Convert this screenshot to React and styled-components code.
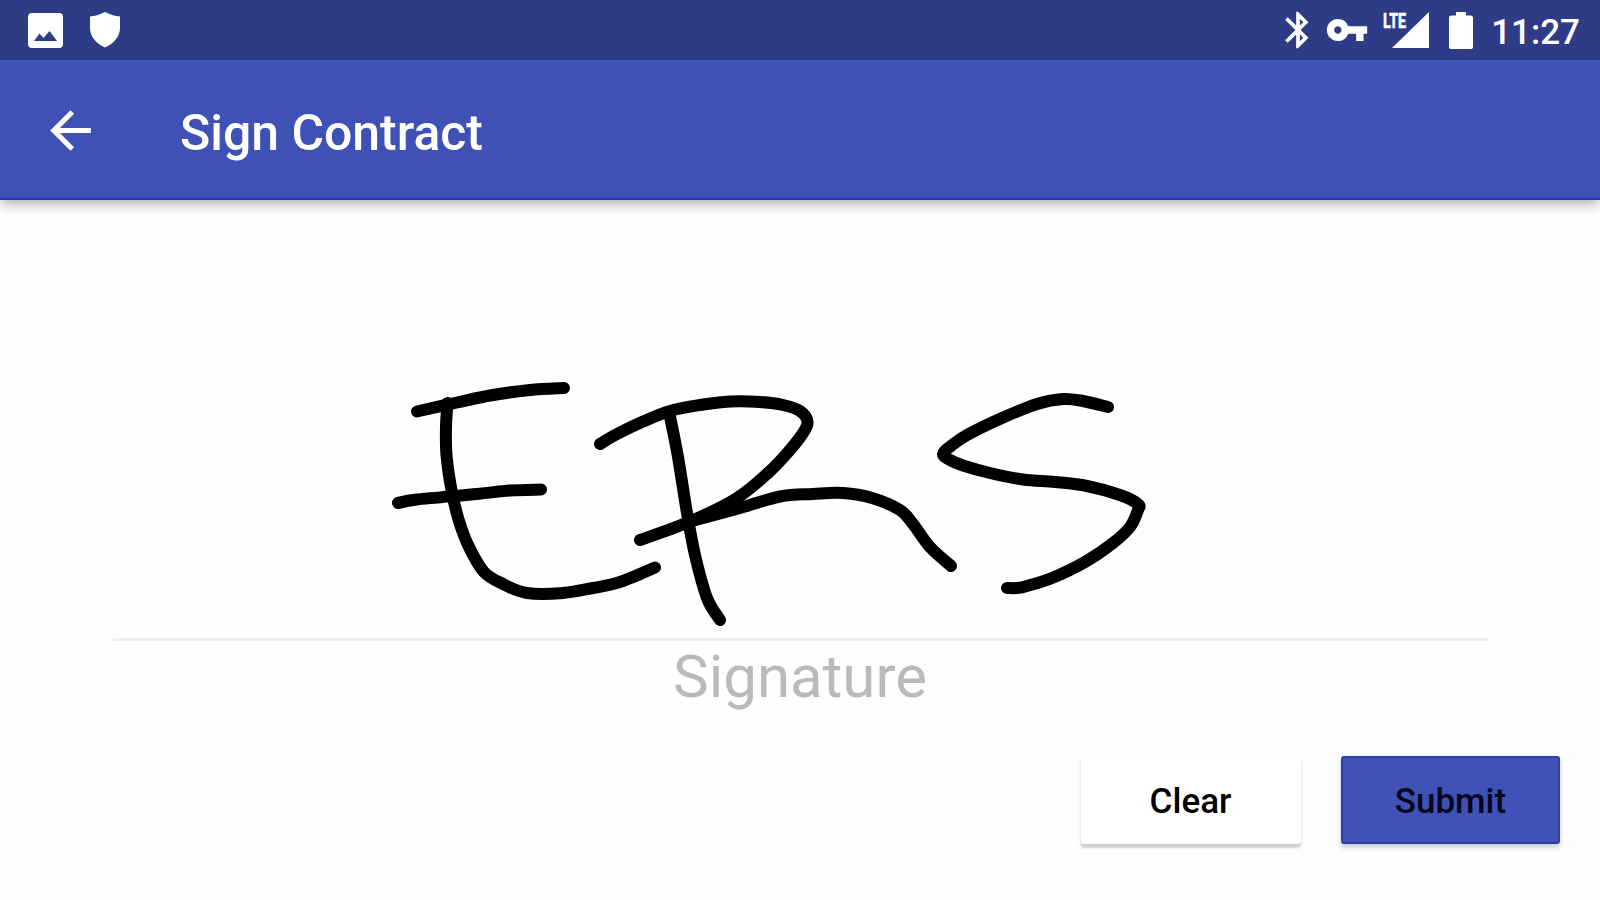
import styled, { createGlobalStyle } from 'styled-components'
import { MdArrowBack, MdBluetooth, MdVpnKey } from 'react-icons/md'

const GlobalStyle = createGlobalStyle`
  * {
    box-sizing: border-box;
  }

  body {
    margin: 0;
    background-color: #fefefe;
    font-family: Roboto, sans-serif;
  }
`

const Screen = styled.div`
  display: flex;
  flex-direction: column;
  width: 1600px;
  height: 900px;
  overflow: hidden;
  background-color: #fefefe;
`

const StatusBar = styled.header`
  display: flex;
  justify-content: space-between;
  align-items: center;
  height: 60px;
  padding: 0 20px 0 28px;
  color: #fff;
  background-color: #2e3c87;
`

const StatusGroup = styled.div`
  display: flex;
  align-items: center;
  gap: ${(props) => props.$gap || 0};
  margin-left: ${(props) => props.$offset || 0};

  svg {
    display: block;
    overflow: visible;
  }
`

const Clock = styled.span`
  margin-left: 18px;
  padding-top: 5px;
  font-size: 35px;
  font-weight: 500;
  line-height: 60px;
`

const AppBar = styled.nav`
  display: flex;
  flex-shrink: 0;
  align-items: center;
  height: 140px;
  padding: 2px 0 0 40px;
  color: #fff;
  background-color: #3f51b5;
  border-bottom: 2px solid #2238ab;
  box-shadow: 0 4px 12px rgba(0, 0, 0, 0.32);
  clip-path: inset(0 0 -24px 0);
`

const BackButton = styled.button`
  display: flex;
  padding: 0;
  border: 0;
  color: inherit;
  background: none;
`

const Title = styled.h1`
  margin: 6px 0 0 79px;
  font-size: 49.9px;
  font-weight: 500;
  line-height: 60px;
`

const SignaturePad = styled.main`
  display: flex;
  flex-direction: column;
  margin: 0 112px 0 113px;
`

const Ink = styled.svg`
  display: block;
  width: 1375px;
  height: 438px;
  fill: none;
  stroke: #000;
  stroke-width: 12px;
  stroke-linecap: round;
  stroke-linejoin: round;
`

const Caption = styled.div`
  padding: 1px 1px 3px 0;
  border-top: 3px solid #eee;
  color: #bababa;
  font-size: 60px;
  line-height: 70px;
  text-align: center;
`

const Actions = styled.footer`
  display: flex;
  justify-content: flex-end;
  gap: 40px;
  padding: 41px 40px 0 0;
`

const Button = styled.button`
  width: ${(props) => props.$width};
  height: 88px;
  padding: ${(props) => (props.$primary ? '2px 0 0' : '2px 1px 0 0')};
  border: ${(props) => (props.$primary ? '2px solid #2a3fb0' : '0')};
  border-radius: 3px;
  color: ${(props) => (props.$primary ? '#04061c' : '#000')};
  background-color: ${(props) => (props.$primary ? '#3f51b5' : '#fff')};
  box-shadow: ${(props) =>
    props.$primary
      ? '0 3px 5px rgba(0, 0, 0, 0.22)'
      : '0 4px 2px rgba(0, 0, 0, 0.14), 0 2px 5px rgba(0, 0, 0, 0.08)'};
  font-family: inherit;
  font-size: 35px;
  font-weight: 500;
`

const strokes = [
  [[417, 411.5], [457, 402.5], [490, 395.5], [530, 390], [564, 388]],
  [[447.5, 403], [446, 427], [446.5, 455], [451.5, 490], [459, 521], [469, 547], [484, 572], [503, 584], [527, 593], [563, 593], [593, 588], [620, 582], [655, 567.5]],
  [[398, 503], [417, 499.5], [477, 494], [510, 490.5], [541, 489.5]],
  [[600, 444], [617, 434], [642, 422], [670, 411], [700, 405], [730, 401.5], [760, 402], [783, 405], [800, 411], [807.5, 421.5], [803, 433], [789, 451], [769, 472], [737, 498], [690, 521.5], [640, 540]],
  [[690, 521.5], [740, 508], [780, 496.5], [813, 494], [843, 493], [872, 498], [900, 510], [913, 524], [930, 547], [951, 566]],
  [[670, 416.5], [678, 457], [687, 513], [695, 555], [707, 598], [720, 620]],
  [[1108, 407], [1083, 401], [1063, 399], [1037, 404], [1002, 418], [967, 435], [951, 446], [943, 454], [950, 460], [963, 465.5], [990, 473], [1023, 479.5], [1055, 482], [1087, 486], [1120, 495], [1138, 504], [1138, 510], [1130, 527], [1113, 543], [1085, 562], [1052, 578], [1027, 586], [1017, 588], [1007, 588]],
]

// Catmull-Rom spline through the touch points
const toPath = (points) => {
  let d = `M${points[0]}`
  for (let i = 0; i < points.length - 1; i++) {
    const p0 = points[i - 1] || points[i]
    const p1 = points[i]
    const p2 = points[i + 1]
    const p3 = points[i + 2] || p2
    const c1 = [p1[0] + (p2[0] - p0[0]) / 6, p1[1] + (p2[1] - p0[1]) / 6]
    const c2 = [p2[0] - (p3[0] - p1[0]) / 6, p2[1] - (p3[1] - p1[1]) / 6]
    d += `C${c1} ${c2} ${p2}`
  }
  return d
}

const PictureIcon = () => (
  <svg width="35" height="35" viewBox="0 0 35 35" fill="currentColor">
    <path
      fillRule="evenodd"
      d="M4 0H31Q35 0 35 4V31Q35 35 31 35H4Q0 35 0 31V4Q0 0 4 0ZM6 28H29L21.500 18 15.500 25 11.500 20.500Z"
    />
  </svg>
)

const ShieldIcon = () => (
  <svg width="30" height="36" viewBox="0 0 30 36" fill="currentColor">
    <path d="M15 0 Q23 4 30 4.500V16C30 25 23 32 15 35.500 7 32 0 25 0 16V4.500Q7 4 15 0Z" />
  </svg>
)

const SignalIcon = () => (
  <svg width="46" height="36" viewBox="0 0 46 36" fill="currentColor">
    <path d="M46 0V36H9Z" />
    <text
      x="0"
      y="16"
      fontSize="21"
      fontWeight="700"
      stroke="currentColor"
      strokeWidth="0.6"
      textLength="23"
      lengthAdjust="spacingAndGlyphs"
    >
      LTE
    </text>
  </svg>
)

const BatteryIcon = () => (
  <svg width="24" height="37" viewBox="0 0 24 37" fill="currentColor">
    <path d="M7 0H17V3.500H21.500Q24 3.500 24 6V35Q24 37 22 37H2Q0 37 0 35V6Q0 3.500 2.500 3.500H7Z" />
  </svg>
)

const App = () => {
  return (
    <Screen>
      <GlobalStyle />
      <StatusBar>
        <StatusGroup $gap="27px">
          <PictureIcon />
          <ShieldIcon />
        </StatusGroup>
        <StatusGroup>
          <StatusGroup $gap="5px">
            <MdBluetooth size={44} />
            <MdVpnKey size={44} />
          </StatusGroup>
          <StatusGroup $gap="20px" $offset="14px">
            <SignalIcon />
            <BatteryIcon />
          </StatusGroup>
          <Clock>11:27</Clock>
        </StatusGroup>
      </StatusBar>
      <AppBar>
        <BackButton aria-label="Back">
          <MdArrowBack size={61} />
        </BackButton>
        <Title>Sign Contract</Title>
      </AppBar>
      <SignaturePad>
        <Ink viewBox="113 200 1375 438">
          {strokes.map((points, index) => (
            <path key={index} d={toPath(points)} />
          ))}
        </Ink>
        <Caption>Signature</Caption>
      </SignaturePad>
      <Actions>
        <Button $width="220px">Clear</Button>
        <Button $primary $width="219px">
          Submit
        </Button>
      </Actions>
    </Screen>
  )
}

export default App
